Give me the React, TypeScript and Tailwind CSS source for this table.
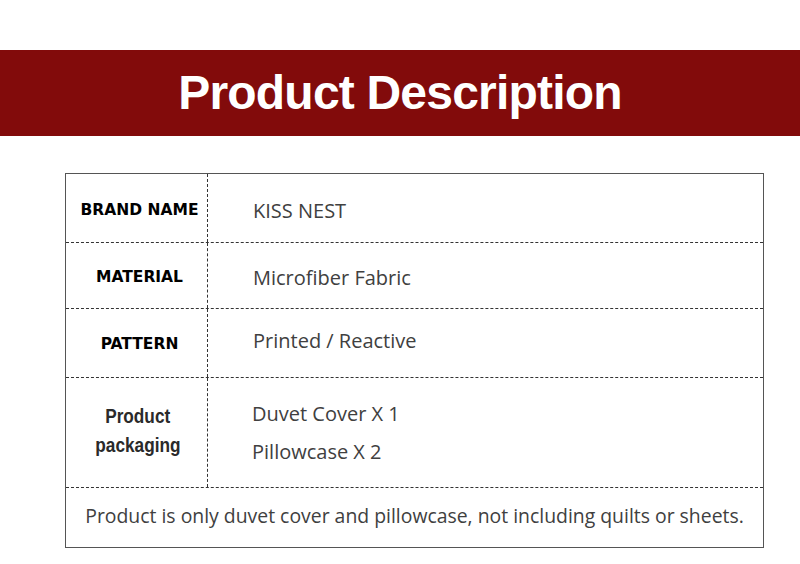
export default function App() {
  const rows = [
    { label: "BRAND NAME", value: "KISS NEST", h: "h-[69px]", lp: "pt-[6px]", vp: "pt-[6px]" },
    { label: "MATERIAL", value: "Microfiber Fabric", h: "h-[66px]", lp: "pt-[4px]", vp: "pt-[4px]" },
    { label: "PATTERN", value: "Printed / Reactive", h: "h-[69px]", lp: "pt-[4px]", vp: "pb-[4px]" },
  ];

  return (
    <div className="w-[800px] h-[564px] bg-white overflow-hidden">
      {/* Banner */}
      <div className="mt-[50px] h-[86px] bg-[#820b0b] flex items-center justify-center">
        <h1 className="text-white text-[48px] font-bold tracking-[-0.8px] font-['Liberation_Sans',Arial,sans-serif] leading-none">
          Product Description
        </h1>
      </div>

      {/* Table */}
      <div className="ml-[65px] mt-[37px] w-[699px] border-[1.5px] border-[#555]">
        {rows.map((r) => (
          <div
            key={r.label}
            className={`flex ${r.h} border-b border-dashed border-[#333]`}
          >
            <div className={`w-[142px] shrink-0 flex items-center justify-center pl-[6px] border-r border-dashed border-[#333] ${r.lp}`}>
              <span className="text-[15.5px] font-bold text-black font-['DejaVu_Sans',sans-serif]">
                {r.label}
              </span>
            </div>
            <div className={`flex-1 flex items-center pl-[45px] ${r.vp}`}>
              <span className="text-[20px] text-[#404040] font-['Open_Sans',sans-serif]">
                {r.value}
              </span>
            </div>
          </div>
        ))}

        <div className="flex h-[110px] border-b border-dashed border-[#333]">
          <div className="w-[142px] shrink-0 flex flex-col items-center justify-center pl-[2px] border-r border-dashed border-[#333] font-['Liberation_Sans',sans-serif] font-bold text-[21px] text-[#2a2a2a] leading-[29px] pb-[6px]">
            <span className="scale-x-[0.82]">Product</span>
            <span className="scale-x-[0.82]">packaging</span>
          </div>
          <div className="flex-1 flex flex-col justify-center pl-[44px] font-['Open_Sans',sans-serif] text-[20px] text-[#404040] leading-[38px]">
            <span>Duvet Cover X 1</span>
            <span>Pillowcase X 2</span>
          </div>
        </div>

        <div className="h-[59px] flex items-center justify-center pb-[3px]">
          <span className="text-[19.4px] text-[#404040] font-['Open_Sans',sans-serif]">
            Product is only duvet cover and pillowcase, not including quilts or sheets.
          </span>
        </div>
      </div>
    </div>
  );
}
